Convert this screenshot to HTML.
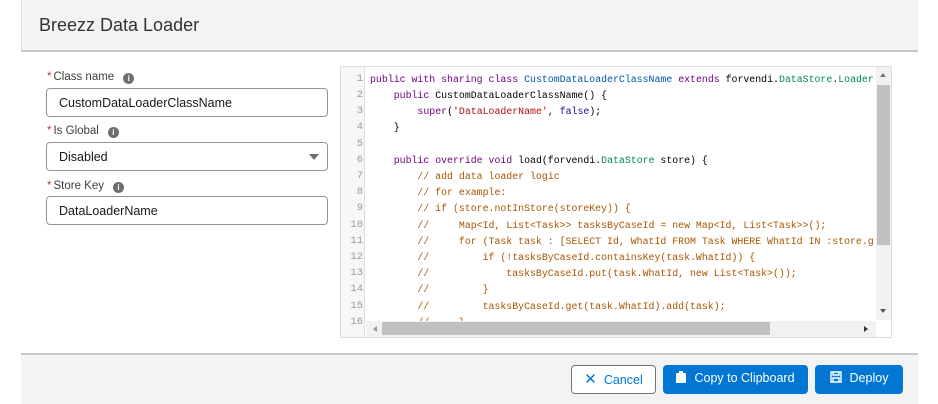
<!DOCTYPE html>
<html><head><style>
*{box-sizing:border-box;margin:0;padding:0}
body{width:938px;height:404px;background:#fff;font-family:"Liberation Sans",sans-serif;position:relative;overflow:hidden}
.hdr{position:absolute;left:21px;top:0;width:897px;height:52px;background:#f3f3f3;border-bottom:2px solid #c9c9c9;border-left:1px solid #ddd}
.hdr h1{font-weight:normal;font-size:18px;color:#333;position:absolute;left:17px;top:15px}
.lbl{position:absolute;left:47px;font-size:11.5px;color:#3e3e3c}
.lbl b{color:#c23934;font-weight:normal;margin-right:2px}
.info{display:inline-block;width:11px;height:11px;border-radius:50%;background:#706e6b;color:#fff;font-size:8px;text-align:center;line-height:11px;font-weight:bold;margin-left:9px;vertical-align:-1px}
.inp{position:absolute;left:46px;width:282px;height:29px;border:1px solid #949494;border-radius:4px;font-size:12.5px;color:#181818;padding:7px 12px}
.code{position:absolute;left:340px;top:66px;width:552px;height:272px;border:1px solid #ddd;background:#fff;overflow:hidden}
.gut{position:absolute;left:0;top:0;width:24px;height:100%;background:#f7f7f7;border-right:1px solid #ddd}
.ln{position:absolute;left:0;width:22px;text-align:right;font:10.5px "Liberation Mono",monospace;color:#999}
.cl{position:absolute;left:29px;white-space:pre;font:9.9px "Liberation Mono",monospace;color:#000}
.k{color:#708}.d{color:#05a}.s{color:#a11}.t{color:#085}.c{color:#a50}.v{color:#219}
.vs{position:absolute;left:535px;top:0;width:15px;height:253px;background:#f1f1f1}
.hs{position:absolute;left:25px;top:254px;width:510px;height:16px;background:#f1f1f1}
.ftr{position:absolute;left:21px;top:353px;width:897px;height:51px;background:#f3f3f3;border-top:2px solid #c9c9c9}
.btn{position:absolute;top:365px;height:29px;border-radius:4px;font-size:12.5px;text-align:center;line-height:27px}
</style></head><body>
<div class="hdr"><h1>Breezz Data Loader</h1></div>
<div class="lbl" style="top:71px"><b>*</b>Class name<span class="info">i</span></div>
<div class="inp" style="top:88px">CustomDataLoaderClassName</div>
<div class="lbl" style="top:125px"><b>*</b>Is Global<span class="info">i</span></div>
<div class="inp" style="top:142px">Disabled<span style="position:absolute;right:8px;top:11px;border-left:5px solid transparent;border-right:5px solid transparent;border-top:6px solid #706e6b"></span></div>
<div class="lbl" style="top:180px"><b>*</b>Store Key<span class="info">i</span></div>
<div class="inp" style="top:196px">DataLoaderName</div>

<div class="code">
<div class="gut"></div>
<div class="ln" style="top:6px">1</div><div class="ln" style="top:22px">2</div><div class="ln" style="top:38px">3</div><div class="ln" style="top:54px">4</div><div class="ln" style="top:71px">5</div><div class="ln" style="top:87px">6</div><div class="ln" style="top:103px">7</div><div class="ln" style="top:119px">8</div><div class="ln" style="top:135px">9</div><div class="ln" style="top:152px">10</div><div class="ln" style="top:168px">11</div><div class="ln" style="top:184px">12</div><div class="ln" style="top:200px">13</div><div class="ln" style="top:216px">14</div><div class="ln" style="top:233px">15</div><div class="ln" style="top:249px">16</div>
<div class="cl" style="top:7px"><span class="k">public with sharing class</span> <span class="d">CustomDataLoaderClassName</span> <span class="k">extends</span> forvendi.<span class="t">DataStore</span>.<span class="t">Loader</span></div>
<div class="cl" style="top:23px">    <span class="k">public</span> CustomDataLoaderClassName() {</div>
<div class="cl" style="top:39px">        <span class="k">super</span>(<span class="s">'DataLoaderName'</span>, <span class="v">false</span>);</div>
<div class="cl" style="top:55px">    }</div>
<div class="cl" style="top:88px">    <span class="k">public override void</span> load(forvendi.<span class="t">DataStore</span> store) {</div>
<div class="cl c" style="top:104px">        // add data loader logic</div>
<div class="cl c" style="top:120px">        // for example:</div>
<div class="cl c" style="top:136px">        // if (store.notInStore(storeKey)) {</div>
<div class="cl c" style="top:153px">        //     Map&lt;Id, List&lt;Task&gt;&gt; tasksByCaseId = new Map&lt;Id, List&lt;Task&gt;&gt;();</div>
<div class="cl c" style="top:169px">        //     for (Task task : [SELECT Id, WhatId FROM Task WHERE WhatId IN :store.g</div>
<div class="cl c" style="top:185px">        //         if (!tasksByCaseId.containsKey(task.WhatId)) {</div>
<div class="cl c" style="top:201px">        //             tasksByCaseId.put(task.WhatId, new List&lt;Task&gt;());</div>
<div class="cl c" style="top:217px">        //         }</div>
<div class="cl c" style="top:234px">        //         tasksByCaseId.get(task.WhatId).add(task);</div>
<div class="cl c" style="top:250px">        //     }</div>
<div class="vs"><div style="position:absolute;left:4px;top:6px;border-left:3px solid transparent;border-right:3px solid transparent;border-bottom:4px solid #777"></div><div style="position:absolute;left:1px;top:18px;width:13px;height:160px;background:#c1c1c1"></div><div style="position:absolute;left:4px;top:242px;border-left:3px solid transparent;border-right:3px solid transparent;border-top:4px solid #555"></div></div>
<div class="hs"><div style="position:absolute;left:7px;top:5px;border-top:3px solid transparent;border-bottom:3px solid transparent;border-right:4px solid #999"></div><div style="position:absolute;left:16px;top:1px;width:388px;height:13px;background:#c1c1c1"></div><div style="position:absolute;left:498px;top:5px;border-top:3px solid transparent;border-bottom:3px solid transparent;border-left:4px solid #333"></div></div>
</div>

<div class="ftr"></div>
<div class="btn" style="left:571px;width:85px;border:1px solid #747474;background:#fff;color:#0176d3"><span style="font-size:15px;margin-right:7px">✕</span>Cancel</div>
<div class="btn" style="left:663px;width:145px;background:#0176d3;color:#fff"><svg width="10" height="12" viewBox="0 0 10 12" style="vertical-align:-1px;margin-right:8px"><rect x="0" y="2" width="10" height="10" rx="1" fill="#fff"/><rect x="3" y="0" width="4" height="3" rx="0.5" fill="#fff"/></svg>Copy to Clipboard</div>
<div class="btn" style="left:815px;width:88px;background:#0176d3;color:#fff"><svg width="12" height="12" viewBox="0 0 12 12" style="vertical-align:-1px;margin-right:8px"><path d="M1 1h10v10H1z M3 1v3h6V1 M3 7h6v4H3z" fill="none" stroke="#fff" stroke-width="1.4"/></svg>Deploy</div>
</body></html>
